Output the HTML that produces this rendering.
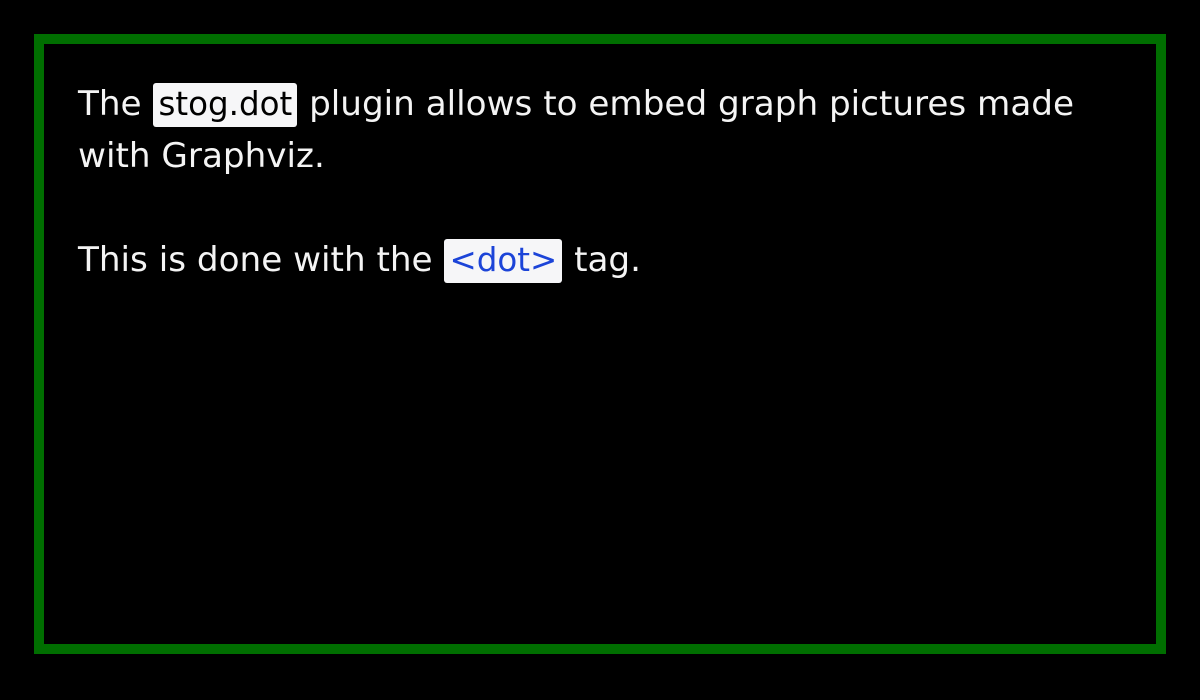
<!DOCTYPE html>
<html><head><style>
html,body{margin:0;padding:0;background:#000;width:1200px;height:700px;overflow:hidden}
.frame{position:absolute;left:34px;top:34px;width:1112px;height:600px;border:10px solid #006e00;}
.t{position:absolute;left:78px;top:78px;width:1060px;font-family:"DejaVu Sans","Liberation Sans",sans-serif;font-size:34.2px;line-height:52px;color:#f4f4f4;}
p{margin:0 0 52px 0}
code{font-family:"DejaVu Sans","Liberation Sans",sans-serif;font-size:32.5px;background:#f6f6f8;color:#000;border-radius:3px;padding:2px 5px 4px 5px;margin:0 1px 0 1px}
code.b{color:#1c44d8}
</style></head><body>
<div class="frame"></div>
<div class="t">
<p>The <code>stog.dot</code> plugin allows to embed graph pictures made with Graphviz.</p>
<p>This is done with the <code class="b">&lt;dot&gt;</code> tag.</p>
</div>
</body></html>
